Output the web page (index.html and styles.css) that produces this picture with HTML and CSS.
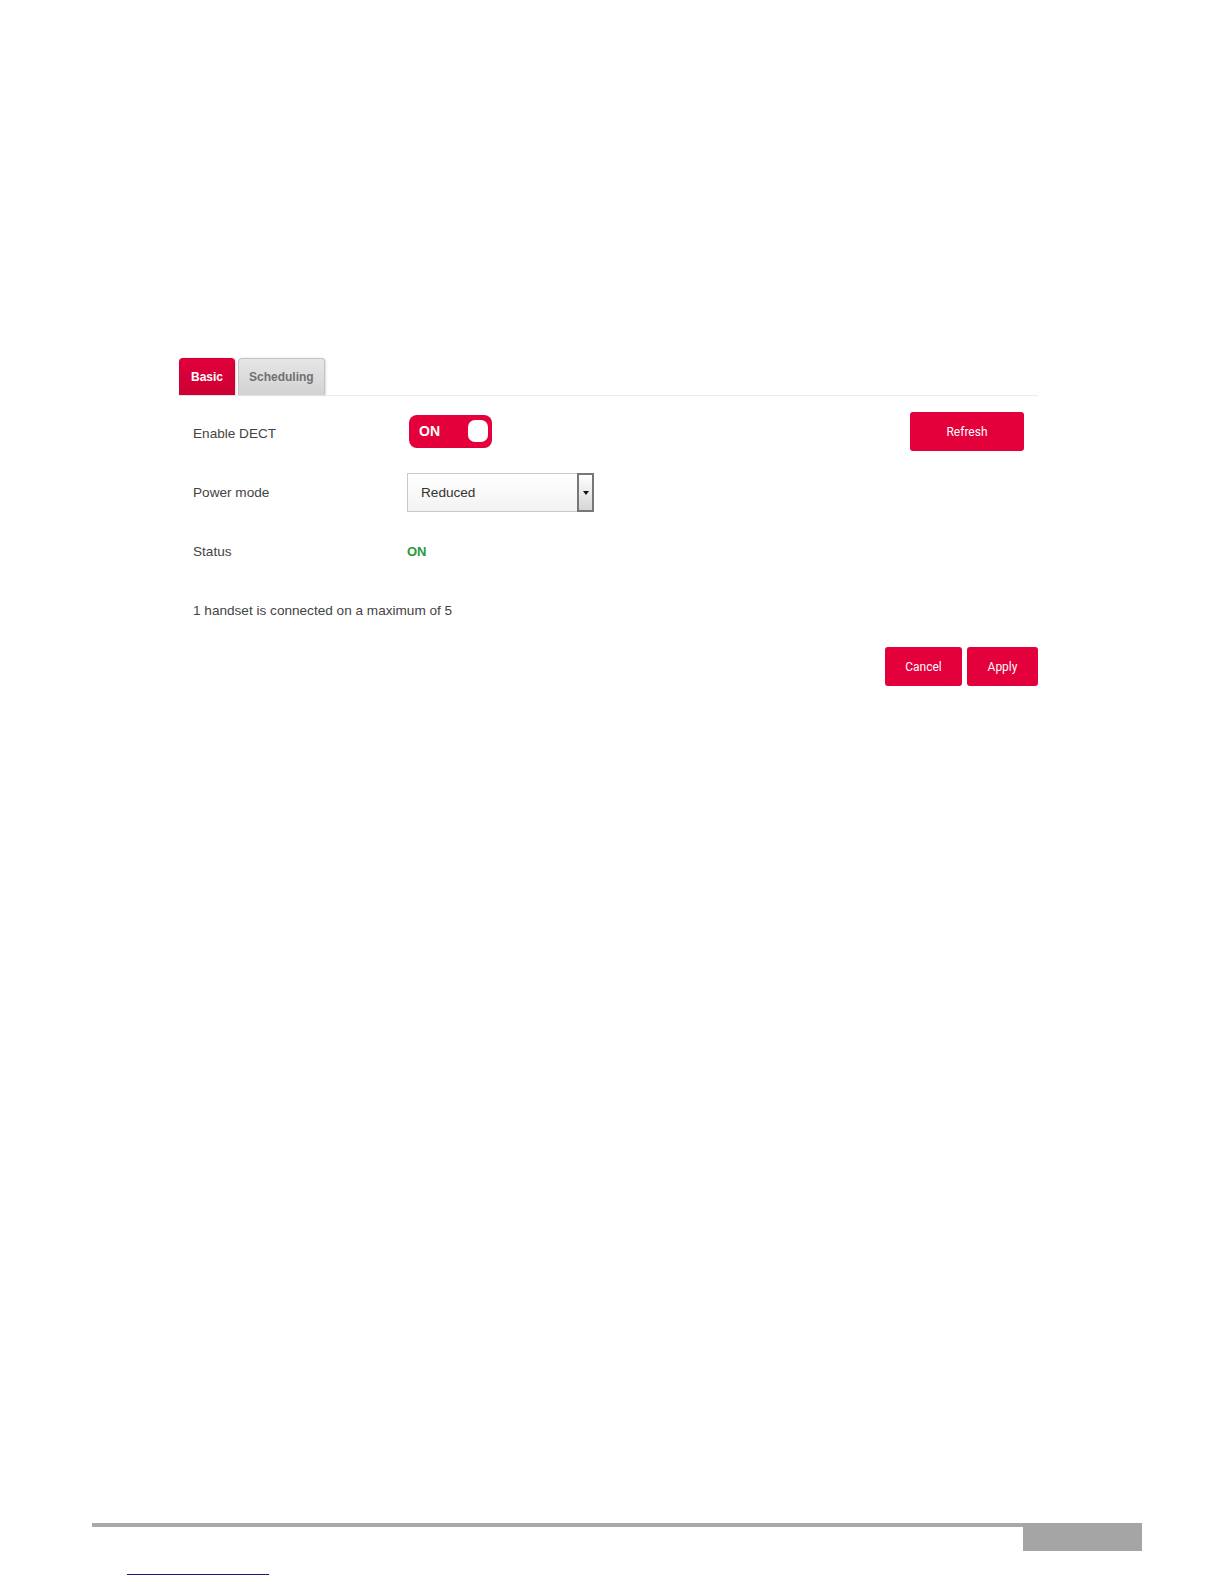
FILE: index.html
```html
<!DOCTYPE html>
<html lang="en">
<head>
  <meta charset="UTF-8" />
  <title>DECT</title>
  <link rel="stylesheet" href="styles.css">
</head>
<body>
  <div class="panel">
    <div class="tabs">
      <div class="tab active">Basic</div>
      <div class="tab">Scheduling</div>
    </div>

    <div class="form">
      <div class="row">
        <div class="label">Enable DECT</div>
        <div class="control">
          <div class="toggle"><span>ON</span><span class="knob"></span></div>
        </div>
        <button class="btn refresh">Refresh</button>
      </div>

      <div class="row">
        <div class="label">Power mode</div>
        <div class="control">
          <div class="select">
            <span class="value">Reduced</span>
            <span class="arrow"></span>
          </div>
        </div>
      </div>

      <div class="row">
        <div class="label">Status</div>
        <div class="control status-on">ON</div>
      </div>

      <div class="row">
        <div class="label wide">1 handset is connected on a maximum of 5</div>
      </div>
    </div>

    <div class="actions">
      <button class="btn cancel">Cancel</button>
      <button class="btn apply">Apply</button>
    </div>
  </div>

  <div class="page-footer">
    <div class="rule"></div>
    <div class="page-box"></div>
  </div>
  <div class="footer-link"></div>
</body>
</html>
```

FILE: styles.css
```css
body { margin: 0; background: #fff; font-family: "Liberation Sans", Arial, sans-serif; color: #444; }

.panel { width: 859px; margin-left: 179px; padding-top: 358px; }

.tabs { display: flex; gap: 3px; border-bottom: 1px solid #ebebeb; height: 37px; }
.tab { height: 37px; box-sizing: border-box; padding: 0 10px; line-height: 37px; font-size: 12px; font-weight: bold; color: #707070; border-radius: 4px 4px 0 0; background: linear-gradient(#e6e6e6, #d2d2d2); border: 1px solid #c4c4c4; border-bottom: none; box-shadow: 1px 0 2px rgba(0,0,0,0.15); }
.tab.active { background: linear-gradient(#e0003c, #cc0033); color: #fff; border-color: #c90032; padding: 0 11px; }

.form { padding-top: 8px; }
.row { display: flex; align-items: center; height: 59px; padding-left: 14px; }
.label { width: 214px; font-size: 13.6px; color: #444; }
.label.wide { width: auto; }
.control { flex: 1; }

.toggle { width: 83px; height: 33px; box-sizing: border-box; background: #e4003a; border-radius: 8px; display: flex; align-items: center; justify-content: space-between; padding: 0 4px 1px 10px; margin-left: 2px; margin-top: -5px; color: #fff; font-weight: bold; font-size: 14px; }
.knob { width: 20px; height: 22px; background: #fff; border-radius: 7px; }

.select { width: 187px; height: 39px; box-sizing: border-box; border: 1px solid #c9c9c9; background: linear-gradient(#fff, #f3f3f3); display: flex; align-items: center; justify-content: space-between; }
.select .value { padding-left: 13px; font-size: 13.6px; color: #333; }
.select .arrow { width: 17px; height: 39px; box-sizing: border-box; margin-right: -1px; border: 2px solid #777; background: linear-gradient(#fff, #d6d6d6); position: relative; }
.select .arrow::after { content: ""; position: absolute; left: 4px; top: 16px; border-left: 3.5px solid transparent; border-right: 3.5px solid transparent; border-top: 4px solid #111; }

.status-on { color: #2a9a3a; font-weight: bold; font-size: 13px; }

.btn { background: #e4003a; color: #fff; border: none; border-radius: 3px; font-family: "Roboto", "Liberation Sans", sans-serif; font-size: 12px; height: 39px; cursor: pointer; }
.refresh { width: 114px; margin-right: 14px; margin-top: -4px; }
.actions { display: flex; justify-content: flex-end; gap: 5px; margin-top: 7px; }
.cancel { width: 77px; }
.apply { width: 71px; }

.page-footer { display: flex; margin-left: 92px; margin-top: 837px; }
.rule { width: 931px; height: 4px; background: #a8a8a8; }
.page-box { width: 119px; height: 28px; background: #a5a5a5; }
.footer-link { width: 142px; margin-left: 127px; margin-top: 23px; border-bottom: 1px solid #1a1a7a; }
```
